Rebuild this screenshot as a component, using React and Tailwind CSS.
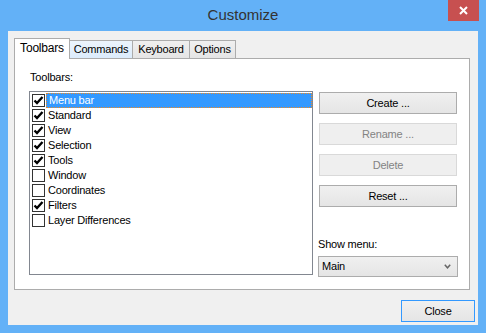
import { useState } from "react";

const items = [
  { name: "Menu bar", checked: true },
  { name: "Standard", checked: true },
  { name: "View", checked: true },
  { name: "Selection", checked: true },
  { name: "Tools", checked: true },
  { name: "Window", checked: false },
  { name: "Coordinates", checked: false },
  { name: "Filters", checked: true },
  { name: "Layer Differences", checked: false },
];

const tabs = ["Toolbars", "Commands", "Keyboard", "Options"];

function CheckBox({ checked }) {
  return (
    <div className="flex h-[13px] w-[13px] shrink-0 items-center justify-center border border-[#333] bg-white">
      {checked && (
        <svg width="11" height="11" viewBox="0 0 11 11">
          <path d="M1.5 5.5 L4 8 L9.5 2" fill="none" stroke="#000" strokeWidth="2.4" />
        </svg>
      )}
    </div>
  );
}

function Button({ children, disabled, primary }) {
  return (
    <div
      className={
        "flex h-[22px] items-center justify-center border " +
        (disabled
          ? "border-[#d9d9d9] bg-[#efefef] text-[#838383]"
          : primary
            ? "border-[#3399ff] bg-gradient-to-b from-[#f0f0f0] to-[#e5e5e5] text-black"
            : "border-[#acacac] bg-gradient-to-b from-[#f0f0f0] to-[#e5e5e5] text-black")
      }
    >
      {children}
    </div>
  );
}

export default function App() {
  const [selected, setSelected] = useState(0);

  return (
    <div
      className="flex h-[333px] w-[486px] flex-col bg-[#63b1f7] text-[11px] text-black"
      style={{ fontFamily: '"Liberation Sans", Arial, sans-serif' }}
    >
      <div className="flex h-[31px] shrink-0 items-start">
        <div className="flex h-[31px] flex-1 items-center justify-center pl-[38px] text-[15px] text-[#333]">
          Customize
        </div>
        <div className="mr-[7px] flex h-[21px] w-[31px] items-center justify-center bg-[#c75050]">
          <svg width="9" height="9" viewBox="0 0 9 9">
            <path d="M1 1 L8 8 M8 1 L1 8" stroke="#fff" strokeWidth="2" />
          </svg>
        </div>
      </div>

      <div className="mx-[8px] flex h-[294px] flex-col bg-[#f0f0f0] tracking-[-0.2px]">
        <div className="ml-[6px] mt-[7px] flex h-[21px] items-end">
          {tabs.map((t, i) =>
            i === 0 ? (
              <div
                key={t}
                className="relative z-10 flex h-[21px] w-[56px] items-center justify-center border border-b-0 border-[#acacac] bg-white pb-[2px] text-[12px]"
              >
                {t}
              </div>
            ) : (
              <div
                key={t}
                className={
                  "-ml-px flex h-[19px] items-center justify-center border border-[#acacac] " +
                  (i === 1
                    ? "w-[64px] bg-gradient-to-b from-[#ecf4fc] to-[#dcecfc]"
                    : i === 2
                      ? "w-[58px] bg-gradient-to-b from-[#f0f0f0] to-[#e5e5e5]"
                      : "w-[47px] bg-gradient-to-b from-[#f0f0f0] to-[#e5e5e5]")
                }
              >
                {t}
              </div>
            )
          )}
        </div>

        <div className="-mt-px ml-[6px] flex h-[232px] w-[456px] flex-col border border-[#acacac] bg-white">
          <div className="ml-[15px] mt-[12px] leading-[13px]">Toolbars:</div>
          <div className="ml-[14px] mt-[7px] flex gap-[6px]">
            <div className="flex h-[184px] w-[284px] flex-col border border-[#828790] bg-white pl-[2px] pt-[1px]">
              {items.map((it, i) => (
                <div
                  key={it.name}
                  className="flex h-[15px] cursor-default items-center"
                  onClick={() => setSelected(i)}
                >
                  <CheckBox checked={it.checked} />
                  <div
                    className={
                      "ml-[1px] flex h-[15px] items-center pl-[2px] " +
                      (i === selected
                        ? "flex-1 border border-dotted border-[#f08a24] bg-[#3399ff] text-white"
                        : "")
                    }
                  >
                    {it.name}
                  </div>
                </div>
              ))}
            </div>

            <div className="flex w-[138px] flex-col">
              <div className="mt-[1px] flex flex-col gap-[9px]">
                <Button>Create ...</Button>
                <Button disabled>Rename ...</Button>
                <Button disabled>Delete</Button>
                <Button>Reset ...</Button>
              </div>
              <div className="mt-[31px] -ml-px leading-[13px]">Show menu:</div>
              <div className="-ml-px mt-[5px] flex h-[21px] w-[140px] items-center justify-between border border-[#acacac] bg-gradient-to-b from-[#f0f0f0] to-[#e5e5e5] px-[3px]">
                <span>Main</span>
                <svg width="7" height="5" viewBox="0 0 7 5" className="mr-[3px]">
                  <path d="M0.8 0.8 L3.5 3.8 L6.2 0.8" fill="none" stroke="#666" strokeWidth="1.5" />
                </svg>
              </div>
            </div>
          </div>
        </div>

        <div className="mr-[3px] mt-[10px] flex justify-end">
          <div className="w-[74px]">
            <Button primary>Close</Button>
          </div>
        </div>
      </div>
    </div>
  );
}
